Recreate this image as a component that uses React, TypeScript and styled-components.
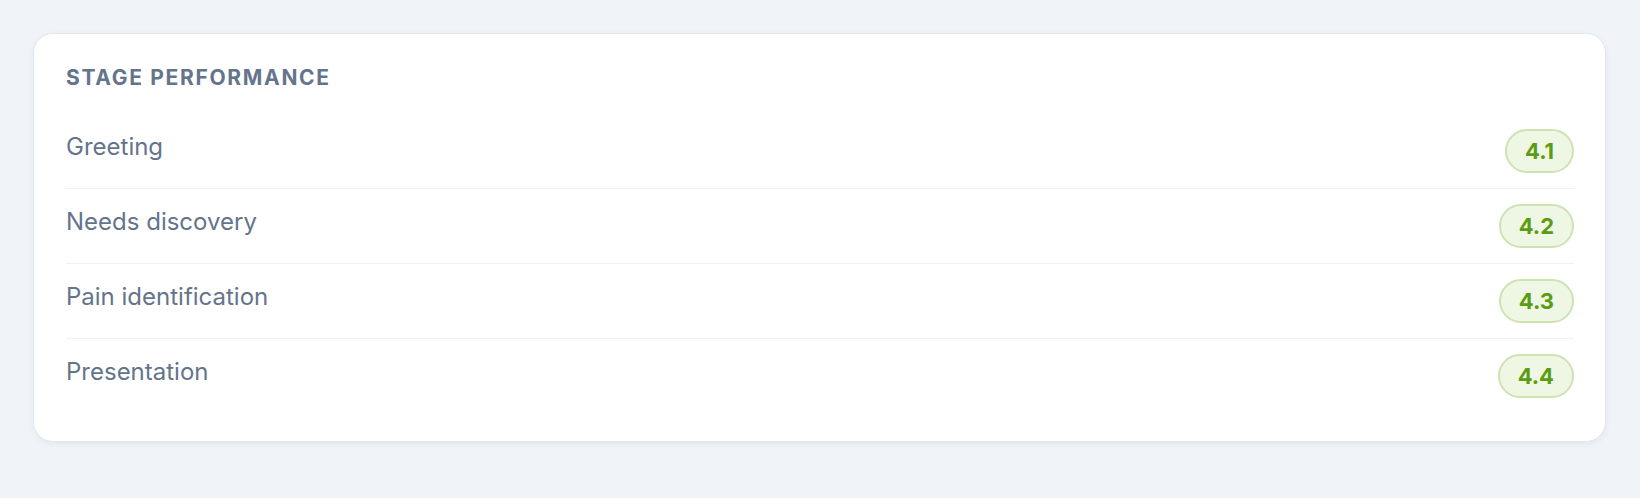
import React from "react";
import styled, { createGlobalStyle } from "styled-components";

const GlobalStyle = createGlobalStyle`
  html, body {
    margin: 0;
    padding: 0;
    background: #f0f3f8;
  }
  body {
    font-family: Inter, "Noto Sans", "Liberation Sans", sans-serif;
    -webkit-font-smoothing: antialiased;
  }
  * { box-sizing: border-box; }
`;

const Page = styled.div`
  padding: 33px 34px 33px 33px;
`;

const Card = styled.section`
  background: #ffffff;
  border: 1px solid #e2e8f0;
  border-radius: 20px;
  box-shadow: 0 2px 6px rgba(15, 23, 42, 0.06);
  padding: 32px 31px 28px 32px;
`;

const Title = styled.h2`
  margin: 0 0 25px 0;
  font-size: 21px;
  line-height: 23px;
  font-weight: 700;
  letter-spacing: 0.08em;
  text-transform: uppercase;
  color: #64748b;
`;

const List = styled.div`
  display: flex;
  flex-direction: column;
`;

const Row = styled.div`
  display: flex;
  align-items: flex-start;
  justify-content: space-between;
  padding: 15px 0;
  border-bottom: 1px solid #eef1f5;
  &:last-child {
    border-bottom: none;
  }
`;

const Label = styled.span`
  font-size: 24px;
  line-height: 36px;
  color: #64748b;
`;

const Badge = styled.span`
  display: inline-flex;
  align-items: center;
  justify-content: center;
  height: 44px;
  padding: 0 18px;
  border-radius: 999px;
  background: #eef6e4;
  border: 2px solid #cde4b0;
  color: #5b9c14;
  font-size: 22px;
  font-weight: 700;
`;

const stages = [
  { name: "Greeting", score: "4.1" },
  { name: "Needs discovery", score: "4.2" },
  { name: "Pain identification", score: "4.3" },
  { name: "Presentation", score: "4.4" },
];

export default function App() {
  return (
    <>
      <GlobalStyle />
      <Page>
        <Card>
          <Title>Stage Performance</Title>
          <List>
            {stages.map((s) => (
              <Row key={s.name}>
                <Label>{s.name}</Label>
                <Badge>{s.score}</Badge>
              </Row>
            ))}
          </List>
        </Card>
      </Page>
    </>
  );
}
